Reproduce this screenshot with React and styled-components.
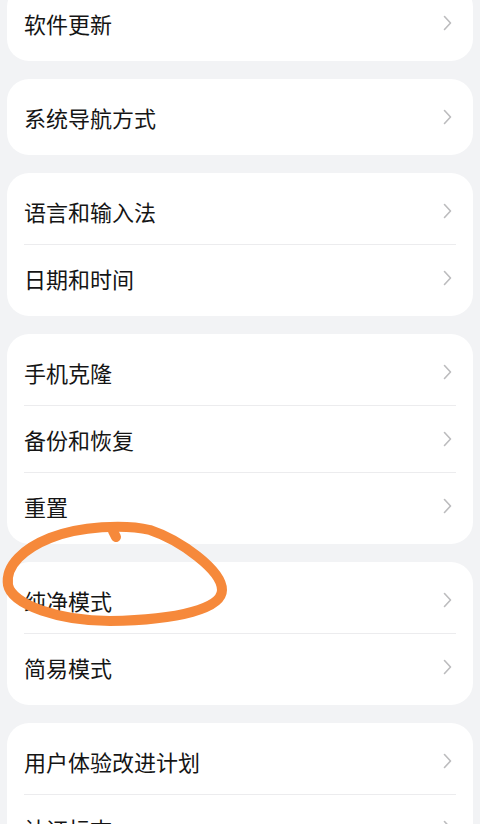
import { Fragment } from 'react';
import styled, { createGlobalStyle } from 'styled-components';

const GlobalStyle = createGlobalStyle`
  body {
    margin: 0;
    background-color: #f2f3f5;
    font-family: "Noto Sans CJK SC", "Noto Sans", sans-serif;
  }
`;

// styled components
const Screen = styled.div`
  position: relative;
  width: 480px;
  height: 824px;
  overflow: hidden;
  background-color: #f2f3f5;
`;

const Page = styled.div`
  display: flex;
  flex-direction: column;
  gap: 18px;
  padding: 0 7px;
  margin-top: -15px;
`;

const Card = styled.section`
  background-color: #fff;
  border-radius: 22px;
  padding: 5px 0;
`;

const Row = styled.div`
  display: flex;
  align-items: center;
  justify-content: space-between;
  height: 66px;
  padding: 0 21px 0 17px;
`;

const Label = styled.span`
  font-size: 22px;
  color: #151515;
`;

const Divider = styled.div`
  height: 1px;
  margin: 0 17px;
  background-color: #ececee;
`;

const Mark = styled.svg`
  position: absolute;
  top: 0;
  left: 0;
  pointer-events: none;
`;

const groups = [
  ['软件更新'],
  ['系统导航方式'],
  ['语言和输入法', '日期和时间'],
  ['手机克隆', '备份和恢复', '重置'],
  ['纯净模式', '简易模式'],
  ['用户体验改进计划', '认证标志'],
];

function Chevron() {
  return (
    <svg width="9" height="16" viewBox="0 0 9 16">
      <polyline
        points="1.5,1.5 7.5,8 1.5,14.5"
        fill="none"
        stroke="#bcbcbe"
        strokeWidth="1.6"
        strokeLinecap="round"
        strokeLinejoin="round"
      />
    </svg>
  );
}

export default function App() {
  return (
    <Screen>
      <GlobalStyle />
      <Page>
        {groups.map((items) => (
          <Card key={items[0]}>
            {items.map((label, i) => (
              <Fragment key={label}>
                {i > 0 && <Divider />}
                <Row>
                  <Label>{label}</Label>
                  <Chevron />
                </Row>
              </Fragment>
            ))}
          </Card>
        ))}
      </Page>
      {/* hand drawn circle round 纯净模式 */}
      <Mark width="480" height="824" viewBox="0 0 480 824">
        <g fill="none" stroke="#f6893b" strokeWidth="10" strokeLinecap="round">
          <path d="M 50 538 C 80 526, 125 524, 150 530 C 180 540, 222 570, 222 590 C 222 608, 180 620, 110 621 C 60 621, 12 605, 8 585 C 5 565, 25 548, 50 538" />
          <path d="M 116 537 L 113 531" />
        </g>
      </Mark>
    </Screen>
  );
}
